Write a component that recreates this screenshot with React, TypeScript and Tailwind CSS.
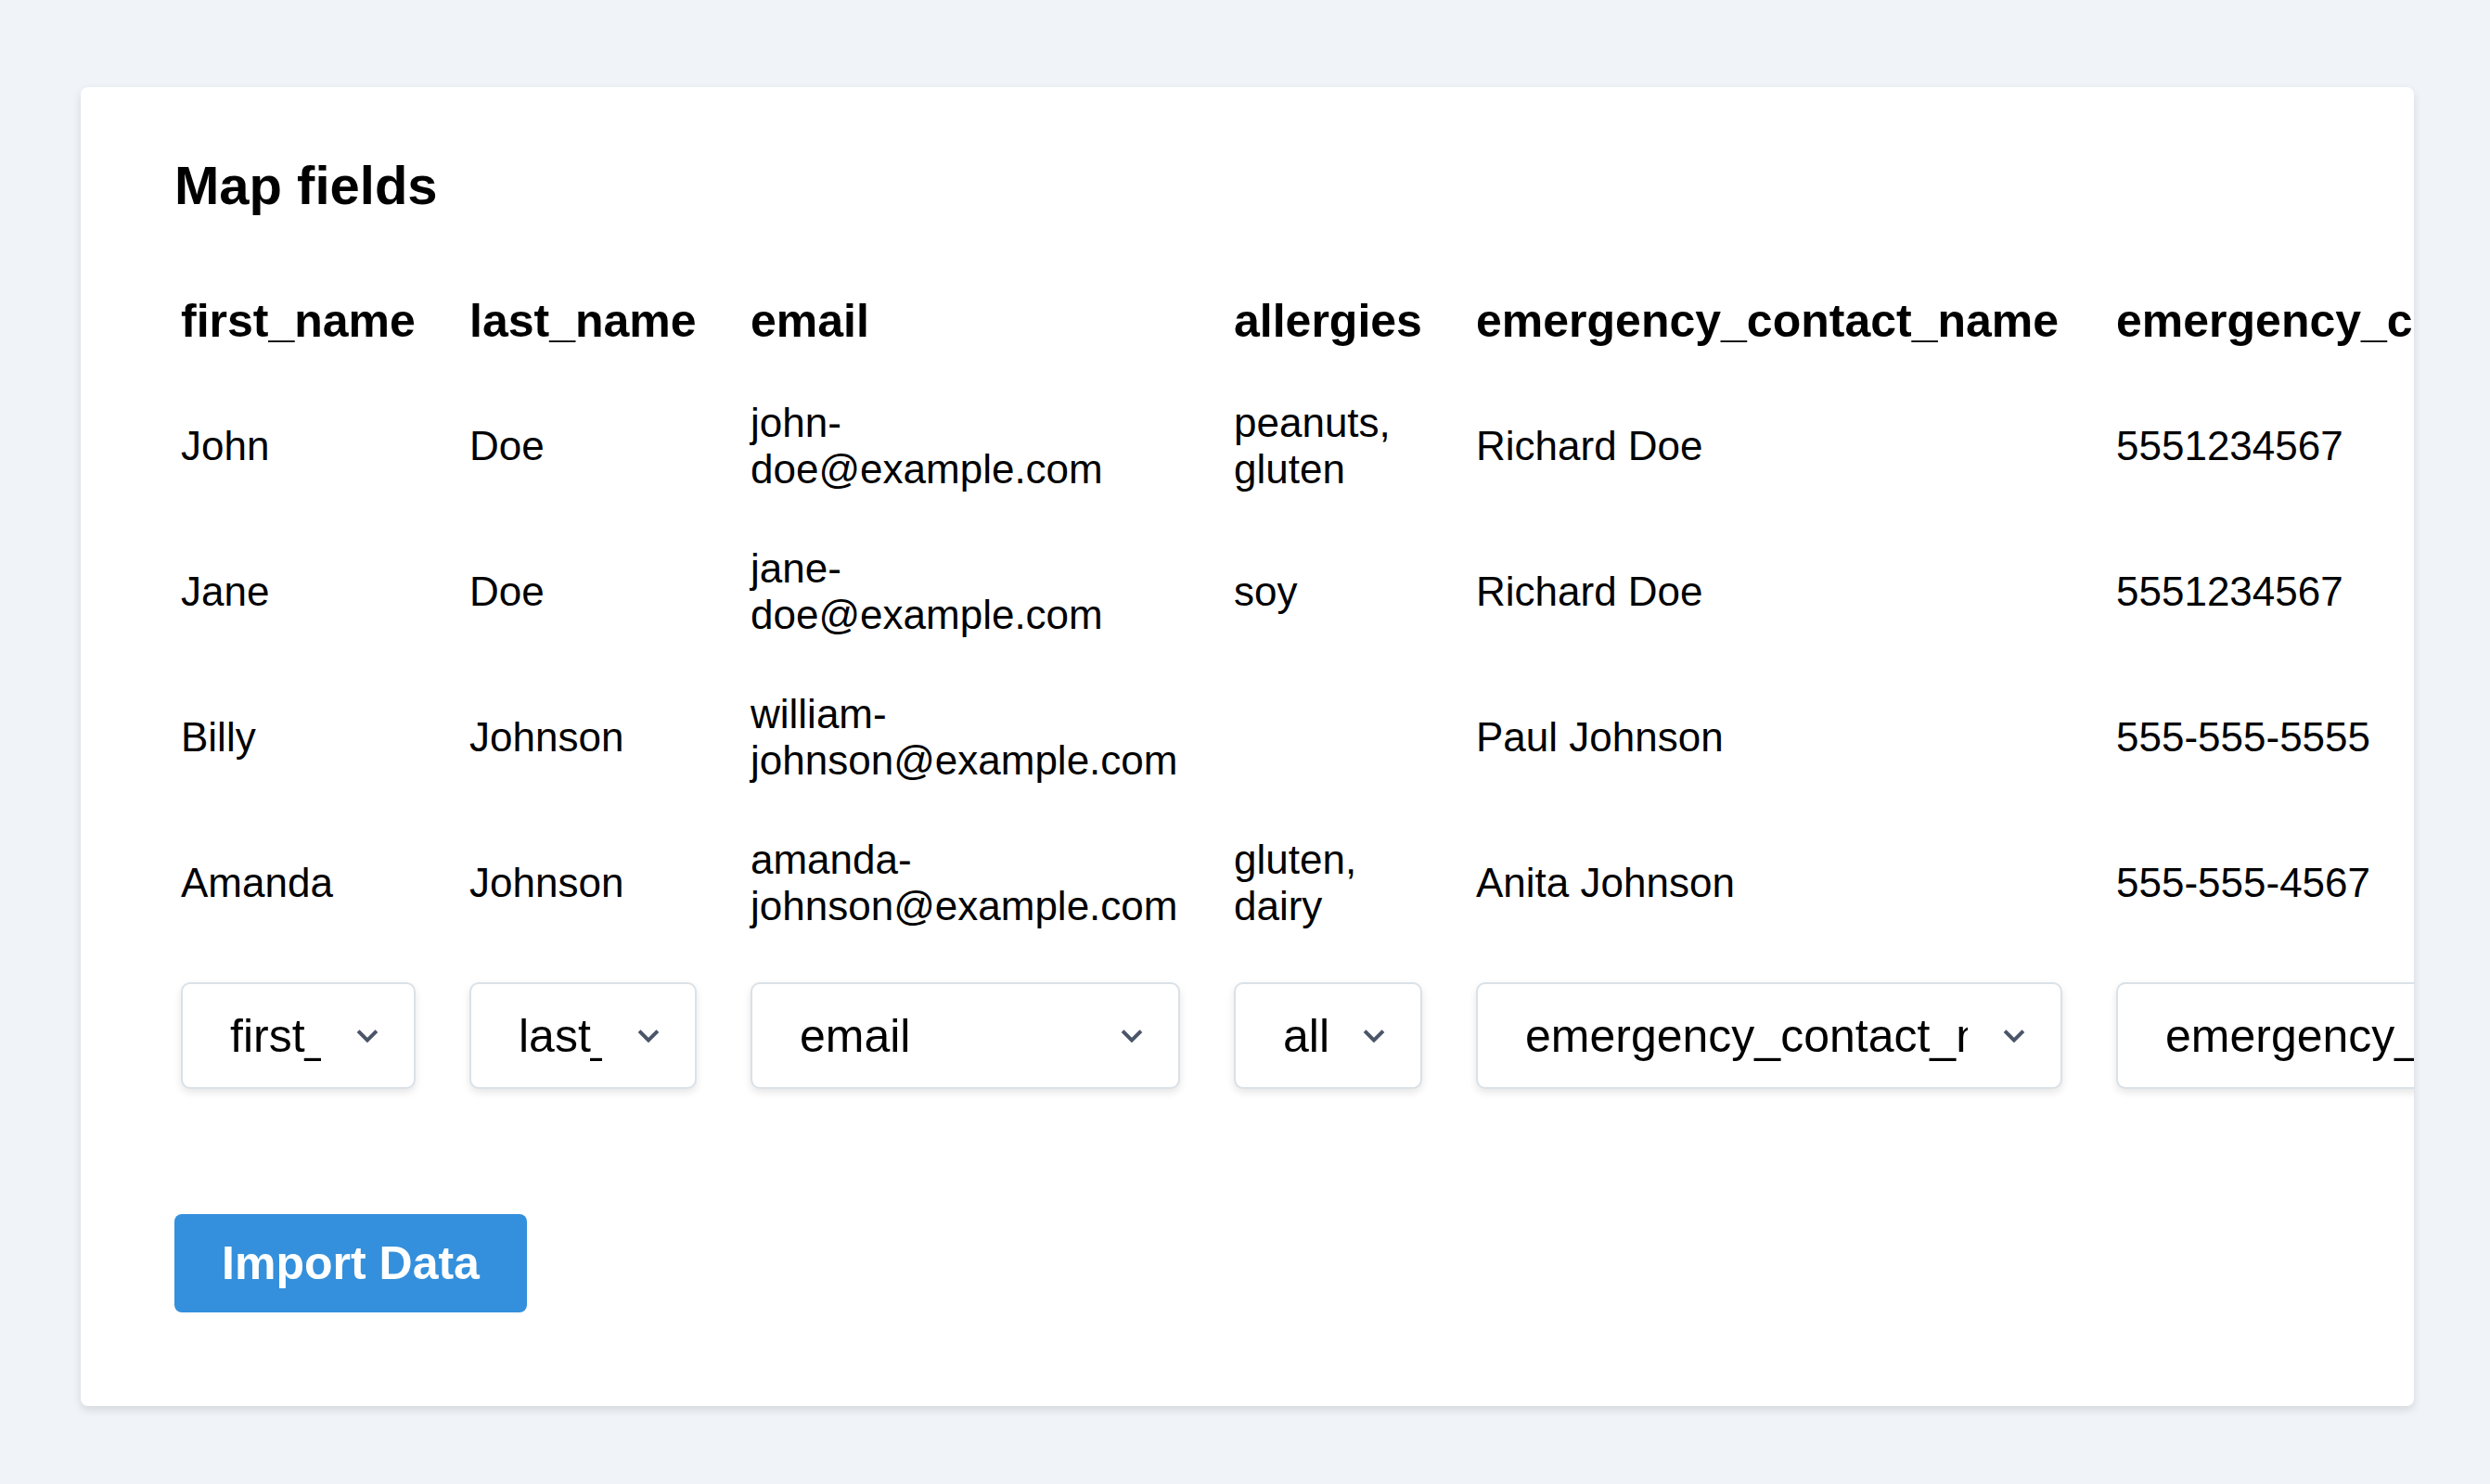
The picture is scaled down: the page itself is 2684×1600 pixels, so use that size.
const columns = [
  'first_name',
  'last_name',
  'email',
  'allergies',
  'emergency_contact_name',
  'emergency_contact_phone',
]

const rows = [
  ['John', 'Doe', 'john-doe@example.com', 'peanuts, gluten', 'Richard Doe', '5551234567'],
  ['Jane', 'Doe', 'jane-doe@example.com', 'soy', 'Richard Doe', '5551234567'],
  ['Billy', 'Johnson', 'william-johnson@example.com', '', 'Paul Johnson', '555-555-5555'],
  ['Amanda', 'Johnson', 'amanda-johnson@example.com', 'gluten, dairy', 'Anita Johnson', '555-555-4567'],
]

function Arrow() {
  return (
    <svg viewBox="0 0 20 20" className="w-[40px] h-[40px] fill-[#4a5568]">
      <path d="M9.293 12.95l.707.707L15.657 8l-1.414-1.414L10 10.828 5.757 6.586 4.343 8z" />
    </svg>
  )
}

function FieldSelect({ value }: { value: string }) {
  return (
    <div className="flex items-center h-[115px] w-full bg-white border-2 border-[#dae1e7] rounded-[10px] shadow-[0_4px_8px_rgba(0,0,0,0.1)]">
      {/* text is clipped before the arrow, like a native select */}
      <div className="flex-1 min-w-0 pl-[51px] overflow-hidden whitespace-nowrap text-[50px] leading-[58px] text-black">
        {value}
      </div>
      <div className="w-[100px] shrink-0 flex justify-center">
        <Arrow />
      </div>
    </div>
  )
}

export default function App() {
  return (
    <div
      className="min-h-screen bg-[#f0f4f8] pl-[87px] pr-[82px] pt-[94px] pb-[82px]"
      style={{ fontFamily: '"Liberation Sans", Arial, sans-serif' }}
    >
      <div className="bg-white rounded-[8px] overflow-hidden shadow-[0_4px_10px_rgba(0,0,0,0.12)] pl-[101px] pt-[73px] pb-[101px]">
        <h1 className="text-[58px] leading-[66px] font-bold text-black">Map fields</h1>

        {/* Mapping table */}
        <div className="mt-[57px] pl-[7px] grid grid-cols-[253px_245px_463px_203px_632px_650px] gap-x-[58px] text-black">
          {columns.map((c) => (
            <div key={c} className="h-[112px] flex items-center text-[50px] leading-[58px] font-bold whitespace-nowrap">
              {c}
            </div>
          ))}

          {rows.map((row, i) =>
            row.map((cell, j) => (
              <div key={`${i}-${j}`} className="h-[157px] flex items-center text-[44px] leading-[50px]">
                <span>{cell}</span>
              </div>
            ))
          )}

          {columns.map((c) => (
            <div key={`s-${c}`} className="pt-[29px]">
              <FieldSelect value={c} />
            </div>
          ))}
        </div>

        <button className="mt-[135px] w-[380px] h-[106px] flex items-center justify-center bg-[#3490dc] rounded-[8px] text-white text-[50px] font-bold">
          Import Data
        </button>
      </div>
    </div>
  )
}
